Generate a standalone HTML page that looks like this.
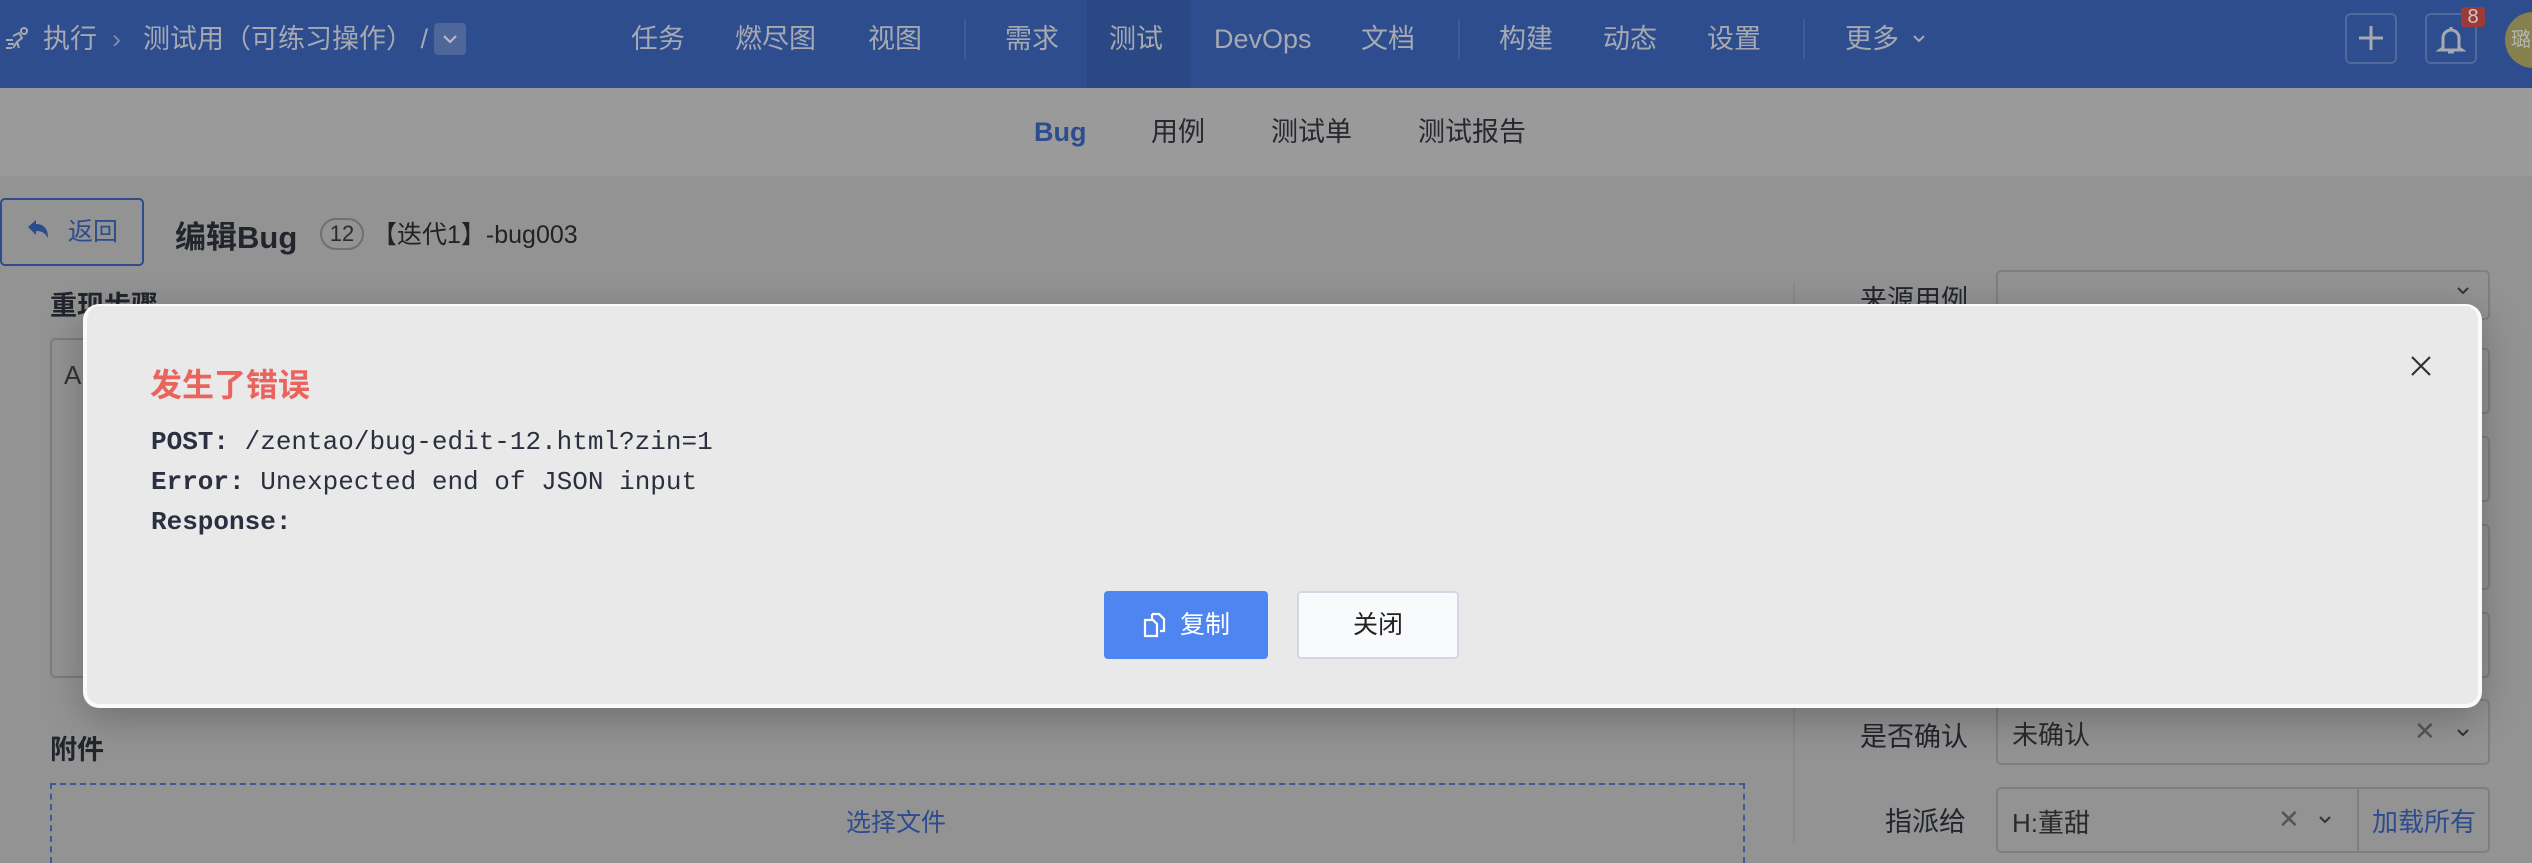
<!DOCTYPE html>
<html><head><meta charset="utf-8"><style>
*{box-sizing:border-box;margin:0;padding:0}
body{width:2532px;height:826px;overflow:hidden;background:#939393;font-family:"Liberation Sans","Noto Sans CJK SC",sans-serif;position:relative}
.abs{position:absolute}
#hdr{left:0;top:0;width:2532px;height:88px;background:#2d4d8e;color:#a6a9b0;font-size:27px}
#hdr .t{position:absolute;top:20px;line-height:38px;white-space:nowrap}
.div{position:absolute;top:19px;width:2px;height:40px;background:#3f5c95}
#sub{left:0;top:88px;width:2532px;height:88px;background:#9a9a9a;font-size:27px;color:#26292f}
#sub span{position:absolute;top:25px;line-height:38px}
.lbl{color:#22252c;font-size:27px;font-weight:bold}
.inp{border:2px solid #7f7f82;border-radius:5px}
#modal{left:83px;top:304px;width:2399px;height:404px;background:#e9e9e9;border-radius:16px;border:4px solid #fafafa;border-top-width:2px;box-shadow:0 10px 40px rgba(0,0,0,.25)}
.code{position:absolute;left:64px;font-family:"Liberation Mono",monospace;font-size:26px;color:#2b3040;line-height:40px;white-space:pre}
</style></head><body>
<div id="hdr" class="abs">
 <svg class="abs" style="left:4px;top:26px" width="26" height="26" viewBox="0 0 26 26" fill="none" stroke="#a6a9b0" stroke-width="2"><circle cx="20" cy="5" r="3"/><path d="M2 14h7M4 18h6M2 22h6M9 10l6-3 3 5-5 4 2 6M13 16l-4 6"/></svg>
 <span class="t" style="left:43px">执行</span>
 <span class="t" style="left:112px;color:#7e8aa5">›</span>
 <span class="t" style="left:143px">测试用（可练习操作） /</span>
 <div class="abs" style="left:434px;top:23px;width:32px;height:32px;background:#4e6699;border-radius:4px"></div>
 <svg class="abs" style="left:442px;top:33px" width="16" height="12" viewBox="0 0 16 12"><path d="M2 3l6 6 6-6" stroke="#b5b9c2" stroke-width="2.2" fill="none"/></svg>
 <span class="t" style="left:631px">任务</span>
 <span class="t" style="left:735px">燃尽图</span>
 <span class="t" style="left:868px">视图</span>
 <div class="div" style="left:964px"></div>
 <span class="t" style="left:1005px">需求</span>
 <div class="abs" style="left:1087px;top:0;width:103px;height:88px;background:#2a4883"></div>
 <span class="t" style="left:1109px">测试</span>
 <span class="t" style="left:1214px">DevOps</span>
 <span class="t" style="left:1361px">文档</span>
 <div class="div" style="left:1458px"></div>
 <span class="t" style="left:1499px">构建</span>
 <span class="t" style="left:1603px">动态</span>
 <span class="t" style="left:1707px">设置</span>
 <div class="div" style="left:1803px"></div>
 <span class="t" style="left:1845px">更多</span>
 <svg class="abs" style="left:1912px;top:33px" width="14" height="12" viewBox="0 0 14 12"><path d="M2 3l5 5 5-5" stroke="#a6a9b0" stroke-width="2" fill="none"/></svg>
 <div class="abs" style="left:2345px;top:13px;width:52px;height:51px;border:2px solid #51699c;border-radius:6px"></div>
 <svg class="abs" style="left:2355px;top:22px" width="32" height="32" viewBox="0 0 32 32"><path d="M16 4v24M4 16h24" stroke="#a6a9b0" stroke-width="3"/></svg>
 <div class="abs" style="left:2425px;top:13px;width:52px;height:51px;border:2px solid #51699c;border-radius:6px"></div>
 <svg class="abs" style="left:2436px;top:24px" width="30" height="32" viewBox="0 0 30 32"><path d="M15 3v3M7 24V14a8 8 0 0 1 16 0v10l3 2H4zM12 28h6" stroke="#a6a9b0" stroke-width="3" fill="none"/></svg>
 <div class="abs" style="left:2461px;top:7px;width:24px;height:20px;background:#9c3a37;border-radius:3px;color:#c9c9c9;font-size:20px;line-height:20px;text-align:center">8</div>
 <div class="abs" style="left:2505px;top:12px;width:56px;height:56px;border-radius:50%;background:#86804f;color:#b6b6b0;font-size:20px;line-height:56px;padding-left:6px">璐</div>
</div>
<div id="sub" class="abs">
 <span style="left:1034px;color:#2c4c8e;font-weight:bold">Bug</span>
 <span style="left:1151px">用例</span>
 <span style="left:1271px">测试单</span>
 <span style="left:1418px">测试报告</span>
</div>
<div class="abs" style="left:0;top:198px;width:144px;height:68px;border:2px solid #2c4c8e;border-radius:5px;color:#2c4c8e;font-size:25px;line-height:64px;padding-left:66px">返回</div>
<svg class="abs" style="left:24px;top:218px" width="28" height="26" viewBox="0 0 28 26"><path d="M4 9l8-7v4c8 0 12 5 12 14-3-5-6-7-12-7v4z" fill="#2c4c8e"/></svg>
<div class="abs lbl" style="left:175px;top:212px;font-size:31px">编辑Bug</div>
<div class="abs" style="left:320px;top:218px;width:44px;height:32px;border:2px solid #6f6f6f;border-radius:16px;font-size:22px;line-height:28px;text-align:center;color:#2b2b2b">12</div>
<div class="abs" style="left:372px;top:215px;font-size:25px;color:#222">【迭代1】-bug003</div>
<div class="abs" style="left:0;top:283px;width:1790px;height:560px;background:#939393"></div>
<div class="abs lbl" style="left:50px;top:284px">重现步骤</div>
<div class="abs inp" style="left:50px;top:338px;width:1700px;height:340px;border-color:#7b7b80"></div>
<div class="abs" style="left:64px;top:360px;font-size:26px;color:#333">A</div>
<div class="abs lbl" style="left:50px;top:728px">附件</div>
<div class="abs" style="left:50px;top:783px;width:1695px;height:80px;border:2px dashed #3d5a92;border-bottom:none"></div>
<div class="abs" style="left:846px;top:803px;font-size:25px;color:#2c4c8e">选择文件</div>
<div class="abs" style="left:1793px;top:283px;width:2px;height:560px;background:#8a8a8a"></div>
<div class="abs lbl" style="left:1860px;top:278px;font-weight:normal">来源用例</div>
<div class="abs inp" style="left:1996px;top:270px;width:494px;height:50px"></div>
<svg class="abs" style="left:2456px;top:286px" width="14" height="10" viewBox="0 0 14 10"><path d="M2 2l5 5 5-5" stroke="#333" stroke-width="2" fill="none"/></svg>
<div class="abs inp" style="left:1996px;top:348px;width:494px;height:66px"></div>
<div class="abs inp" style="left:1996px;top:436px;width:494px;height:66px"></div>
<div class="abs inp" style="left:1996px;top:524px;width:494px;height:66px"></div>
<div class="abs inp" style="left:1996px;top:612px;width:494px;height:66px"></div>
<div class="abs" style="left:1860px;top:715px;font-size:27px;color:#22252c">是否确认</div>
<div class="abs inp" style="left:1996px;top:699px;width:494px;height:66px"></div>
<div class="abs" style="left:2012px;top:715px;font-size:26px;color:#2a2a2a">未确认</div>
<div class="abs" style="left:2414px;top:716px;font-size:26px;color:#555">✕</div>
<svg class="abs" style="left:2456px;top:728px" width="14" height="10" viewBox="0 0 14 10"><path d="M2 2l5 5 5-5" stroke="#333" stroke-width="2" fill="none"/></svg>
<div class="abs" style="left:1885px;top:800px;font-size:27px;color:#22252c">指派给</div>
<div class="abs inp" style="left:1996px;top:787px;width:494px;height:66px"></div>
<div class="abs" style="left:2357px;top:787px;width:2px;height:66px;background:#7f7f82"></div>
<div class="abs" style="left:2012px;top:803px;font-size:26px;color:#2a2a2a">H:董甜</div>
<div class="abs" style="left:2278px;top:804px;font-size:26px;color:#555">✕</div>
<svg class="abs" style="left:2318px;top:815px" width="14" height="10" viewBox="0 0 14 10"><path d="M2 2l5 5 5-5" stroke="#333" stroke-width="2" fill="none"/></svg>
<div class="abs" style="left:2372px;top:802px;font-size:26px;color:#2c4c8e">加载所有</div>

<div id="modal" class="abs">
 <div class="abs" style="left:63px;top:54px;font-size:32px;font-weight:bold;color:#e9645d">发生了错误</div>
 <svg class="abs" style="left:2322px;top:48px" width="24" height="24" viewBox="0 0 24 24"><path d="M3 3l18 18M21 3L3 21" stroke="#333" stroke-width="2.2"/></svg>
 <div class="code" style="top:116px"><b>POST:</b> /zentao/bug-edit-12.html?zin=1</div>
 <div class="code" style="top:156px"><b>Error:</b> Unexpected end of JSON input</div>
 <div class="code" style="top:196px"><b>Response:</b></div>
 <div class="abs" style="left:1017px;top:285px;width:164px;height:68px;background:#4f85f0;border-radius:4px;color:#fff;font-size:25px;line-height:68px;padding-left:76px">复制</div>
 <svg class="abs" style="left:1053px;top:304px" width="30" height="30" viewBox="0 0 30 30" fill="none" stroke="#fff" stroke-width="2.2"><path d="M12 4h7l5 5v12h-4M12 4v6"/><path d="M5 10h8l4 4v12H5z"/></svg>
 <div class="abs" style="left:1210px;top:285px;width:162px;height:68px;background:#f9fafc;border:2px solid #d3d6e3;border-radius:4px;color:#222;font-size:25px;line-height:64px;text-align:center">关闭</div>
</div>
</body></html>
